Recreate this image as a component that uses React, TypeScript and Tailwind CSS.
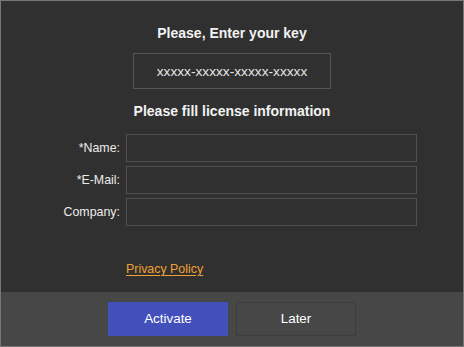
import React, { useState } from 'react';

export default function App() {
  const [form, setForm] = useState({ key: '', name: '', email: '', company: '' });

  const handleChange = (e: React.ChangeEvent<HTMLInputElement>) => {
    setForm({ ...form, [e.target.name]: e.target.value });
  };

  const fields = [
    { name: 'name', label: '*Name:' },
    { name: 'email', label: '*E-Mail:' },
    { name: 'company', label: 'Company:' },
  ] as const;

  return (
    <div
      className="w-[464px] h-[347px] flex flex-col border border-[#777777] bg-[#303030] text-white"
      style={{ fontFamily: '"Liberation Sans", Arial, sans-serif' }}
    >
      {/* Body */}
      <div className="flex-1 flex flex-col items-center pt-[24px]">
        <h1 className="text-[14px] leading-[16px] font-bold text-[#f2f2f2]">Please, Enter your key</h1>

        <input
          name="key"
          value={form.key}
          onChange={handleChange}
          placeholder="xxxxx-xxxxx-xxxxx-xxxxx"
          className="mt-[12px] w-[198px] h-[36px] border border-[#555555] bg-transparent text-center text-[13.7px] text-[#e6e6e6] placeholder-[#e6e6e6] outline-none"
        />

        <h2 className="mt-[14px] text-[14px] leading-[16px] font-bold text-[#f2f2f2]">Please fill license information</h2>

        <div className="mt-[15px] flex flex-col gap-[4px] self-stretch pl-[58px]">
          {fields.map((f) => (
            <div key={f.name} className="flex items-center gap-[6px]">
              <label htmlFor={f.name} className="w-[61px] text-right text-[12.4px] text-[#ececec]">
                {f.label}
              </label>
              <input
                id={f.name}
                name={f.name}
                value={form[f.name]}
                onChange={handleChange}
                className="w-[291px] h-[28px] border border-[#505050] bg-transparent px-1 text-[12px] text-[#e8e8e8] outline-none"
              />
            </div>
          ))}

          <div className="mt-[26px] pl-[67px]">
            <a href="#" className="text-[12.4px] leading-[16px] text-[#f0a030] underline underline-offset-2">
              Privacy Policy
            </a>
          </div>
        </div>
      </div>

      {/* Footer */}
      <div className="h-[54px] bg-[#474747] flex justify-center items-start pt-[10px] gap-[8px]">
        <button className="w-[120px] h-[34px] bg-[#434fbb] text-[13.4px] text-white">Activate</button>
        <button className="w-[120px] h-[34px] border border-[#3d3d3d] bg-[#474747] text-[13.4px] text-white">Later</button>
      </div>
    </div>
  );
}
